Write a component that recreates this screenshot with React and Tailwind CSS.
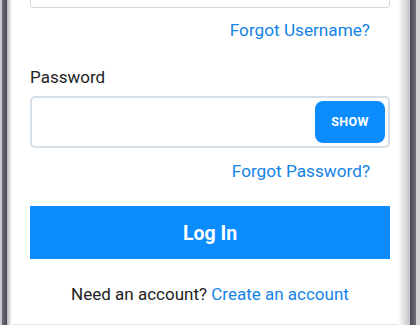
export default function App() {
  return (
    <div className="w-[420px] h-[325px] flex bg-white overflow-hidden" style={{ fontFamily: 'Roboto, "Liberation Sans", sans-serif' }}>
      <div className="w-[12px] h-full flex shrink-0">
        <div className="w-[2px] h-full bg-[#c9c9cc]" />
        <div className="w-[5px] h-full bg-gradient-to-r from-[#6e6e78] to-[#4a4a55]" />
        <div className="w-[5px] h-full bg-gradient-to-r from-[#b8b8bc] to-[#ffffff]" />
      </div>
      <div className="flex-1 h-full flex flex-col pl-[18px] pr-[8px] border-b border-[#e4e4e4]">
        <div className="h-[8px] border border-t-0 border-[#d3dbe3] rounded-b-[4px]" />
        <div className="mt-[12px] h-[20px] leading-[20px] text-right pr-[20px] text-[17.2px] text-[#1483e6]">Forgot Username?</div>
        <div className="mt-[27px] h-[20px] leading-[20px] text-[17px] text-[#222]">Password</div>
        <div className="mt-[9px] h-[52px] border-2 border-[#d5dde6] rounded-[5px] flex items-center justify-end pr-[3px]">
          <div className="w-[70px] h-[42px] rounded-[8px] bg-[#0a8cff] flex items-center justify-center text-white font-bold text-[12.5px] tracking-[0.3px]">SHOW</div>
        </div>
        <div className="mt-[13px] h-[20px] leading-[20px] text-right pr-[20px] text-[17.2px] text-[#1483e6]">Forgot Password?</div>
        <div className="mt-[25px] h-[53px] bg-[#0a8cff] flex items-center justify-center text-white font-bold text-[19.5px] pt-[3px]">Log In</div>
        <div className="mt-[25px] h-[20px] leading-[20px] text-center text-[17px] text-[#222]">
          Need an account? <span className="text-[#1483e6]">Create an account</span>
        </div>
      </div>
      <div className="w-[22px] h-full flex shrink-0">
        <div className="w-[12px] h-full bg-gradient-to-r from-[#ffffff] to-[#c4c4c8]" />
        <div className="w-[6px] h-full bg-gradient-to-r from-[#4a4a55] to-[#6e6e78]" />
        <div className="w-[4px] h-full bg-[#d4d4d6]" />
      </div>
    </div>
  );
}
